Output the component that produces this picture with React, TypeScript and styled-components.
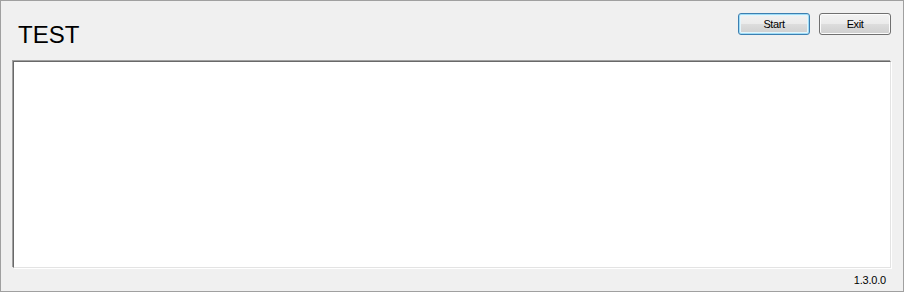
import styled, { createGlobalStyle } from 'styled-components';

const GlobalStyle = createGlobalStyle`
  html, body {
    margin: 0;
    padding: 0;
    background: #f0f0f0;
  }
`;

const Window = styled.div`
  width: 904px;
  height: 292px;
  box-sizing: border-box;
  border: 1px solid #a0a0a0;
  background: #f0f0f0;
  display: flex;
  flex-direction: column;
  padding: 0 12px 0 12px;
  font-family: 'Liberation Sans', Arial, sans-serif;
`;

const Header = styled.div`
  height: 60px;
  display: flex;
  justify-content: space-between;
  align-items: flex-start;
`;

const Title = styled.h1`
  margin: 20px 0 0 5px;
  font-size: 24px;
  font-weight: normal;
  color: #000;
  line-height: 28px;
`;

const ButtonRow = styled.div`
  display: flex;
  gap: 9px;
  margin-top: 12px;
`;

const Button = styled.button<{ $focused?: boolean }>`
  width: 72px;
  height: 22px;
  box-sizing: border-box;
  border: 1px solid ${(p) => (p.$focused ? '#3c7fb1' : '#707070')};
  border-radius: 3px;
  background: linear-gradient(
    to bottom,
    #f2f2f2 0%,
    #ebebeb 50%,
    #dddddd 50%,
    #cfcfcf 100%
  );
  box-shadow: inset 0 0 0 1px ${(p) => (p.$focused ? '#9fdcf6' : '#fcfcfc')}
    ${(p) => (p.$focused ? ', inset 0 0 0 2px #e4f5fc' : '')};
  font-family: 'Liberation Sans', Arial, sans-serif;
  font-size: 11px;
  letter-spacing: -0.4px;
  color: #000;
  padding: 0;
`;

const OutputBox = styled.div`
  width: 878px;
  height: 207px;
  box-sizing: border-box;
  background: #fff;
  border-top: 1px solid #696969;
  border-left: 1px solid #696969;
  border-right: 1px solid #e3e3e3;
  border-bottom: 1px solid #e3e3e3;
  box-shadow: -1px -1px 0 #a0a0a0, 1px 1px 0 #fff;
`;

const Footer = styled.div`
  display: flex;
  justify-content: flex-end;
  padding-right: 5px;
  margin-top: 6px;
`;

const Version = styled.span`
  font-size: 11px;
  letter-spacing: -0.2px;
  color: #000;
`;

export default function App() {
  return (
    <>
      <GlobalStyle />
      <Window>
        <Header>
          <Title>TEST</Title>
          <ButtonRow>
            <Button $focused>Start</Button>
            <Button>Exit</Button>
          </ButtonRow>
        </Header>
        <OutputBox />
        <Footer>
          <Version>1.3.0.0</Version>
        </Footer>
      </Window>
    </>
  );
}
